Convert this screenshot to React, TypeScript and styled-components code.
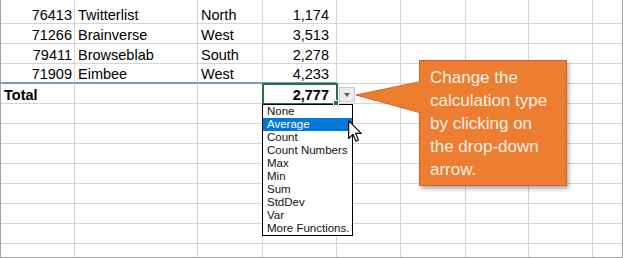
import styled, { createGlobalStyle } from "styled-components";

const GlobalStyle = createGlobalStyle`
    html, body {
        margin: 0;
        padding: 0;
        background: #fff;
        overflow: hidden;
    }
`;

const COLS = [74, 123, 65, 74, 64, 65, 63, 64, 29];
const ROW_HEIGHTS = [24, 20, 20, 20, 20, 20, 20, 20, 20, 20, 20, 20, 13];

const Sheet = styled.div`
    position: relative;
    width: 623px;
    height: 258px;
    box-sizing: border-box;
    border: 1px solid #a3a3a3;
    border-top: none;
    font-family: "Liberation Sans", Arial, sans-serif;
    color: #000;
`;

const Grid = styled.div`
    display: grid;
    grid-template-columns: ${COLS.map(c => `${c}px`).join(" ")};
    grid-template-rows: ${ROW_HEIGHTS.map(r => `${r}px`).join(" ")};
`;

const Cell = styled.div<{ $right?: boolean, $bold?: boolean, $lastCol?: boolean, $lastRow?: boolean, $blue?: boolean, $padR?: number, $selected?: boolean }>`
    position: relative;
    box-sizing: border-box;
    display: flex;
    align-items: flex-end;
    justify-content: ${props => props.$right ? "flex-end" : "flex-start"};
    padding: 0 ${props => props.$padR ?? 2}px 0 3px;
    font-size: 14.5px;
    line-height: 15px;
    font-weight: ${props => props.$bold ? 700 : 400};
    white-space: nowrap;
    overflow: ${props => props.$selected ? "visible" : "hidden"};
    border-right: ${props => props.$lastCol ? "none" : "1px solid #d4d4d4"};
    border-bottom: ${props => props.$lastRow ? "none" : props.$blue ? "2px solid #7f95c2" : "1px solid #d4d4d4"};
    outline: ${props => props.$selected ? "2px solid #217346" : "none"};
    outline-offset: -1px;
    z-index: ${props => props.$selected ? 2 : "auto"};

    ${props => props.$selected && `
        &::after {
            content: "";
            position: absolute;
            right: -3px;
            bottom: -3px;
            width: 4px;
            height: 4px;
            background: #217346;
            border: 1px solid #fff;
        }
    `}
`;

const ArrowButton = styled.div`
    position: absolute;
    left: 76px;
    top: 3px;
    width: 16px;
    height: 15px;
    box-sizing: border-box;
    background: #ececec;
    border: 1px solid #c9c9c9;
    display: flex;
    align-items: center;
    justify-content: center;

    &::after {
        content: "";
        border-left: 3.5px solid transparent;
        border-right: 3.5px solid transparent;
        border-top: 4px solid #5a5a5a;
    }
`;

const Popup = styled.div`
    position: absolute;
    left: -1px;
    top: 20px;
    font-weight: 400;
`;

const DropList = styled.ul`
    width: 91px;
    margin: 0;
    padding: 0;
    list-style: none;
    box-sizing: border-box;
    background: #fff;
    border: 1px solid #000;
    overflow: hidden;
`;

const DropItem = styled.li<{ $active?: boolean }>`
    height: 13px;
    line-height: 13px;
    padding-left: 4px;
    font-size: 11.5px;
    white-space: nowrap;
    background: ${props => props.$active ? "#0078d7" : "transparent"};
    color: ${props => props.$active ? "#fff" : "#111"};
`;

const Cursor = styled.svg`
    position: absolute;
    left: 86px;
    top: 16px;
    overflow: visible;
`;

const Callout = styled.div`
    position: absolute;
    left: 354px;
    top: 60px;
    display: flex;
    align-items: flex-start;
`;

const Pointer = styled.svg`
    position: relative;
    z-index: 1;
    flex: none;
    margin-top: 20px;
    margin-right: -2px;
    overflow: visible;
`;

const CalloutBox = styled.div`
    width: 148px;
    height: 126px;
    box-sizing: border-box;
    padding: 5px 6px 0 10px;
    background: #ed7d31;
    border: 1px solid #c9651f;
    box-shadow: 2px 3px 4px rgba(0, 0, 0, 0.3);
    color: #fdf1e4;
    font-size: 17px;
    line-height: 23px;
`;

const CalloutLine = styled.span`
    display: block;
    white-space: nowrap;
`;

const rows: string[][] = [
    ["76413", "Twitterlist", "North", "1,174"],
    ["71266", "Brainverse", "West", "3,513"],
    ["79411", "Browseblab", "South", "2,278"],
    ["71909", "Eimbee", "West", "4,233"],
    ["Total", "", "", "2,777"],
];

const functions = ["None", "Average", "Count", "Count Numbers", "Max", "Min", "Sum", "StdDev", "Var", "More Functions."];

const TotalDropdown = () => (
    <>
        <ArrowButton />
        <Popup>
            <DropList>
                {functions.map(f => (
                    <DropItem key={f} $active={f === "Average"}>{f}</DropItem>
                ))}
            </DropList>
            <Cursor width="14" height="22" viewBox="0 0 12 19">
                <path d="M0.5 0.5 L0.5 16 L4.2 12.4 L6.8 18.3 L9 17.3 L6.5 11.6 L11.3 11.6 Z" fill="#fff" stroke="#000" strokeWidth="1" strokeLinejoin="round" />
            </Cursor>
        </Popup>
    </>
);

const App = () => {
    return (
        <>
            <GlobalStyle />
            <Sheet>
                <Grid>
                    {ROW_HEIGHTS.map((_, r) =>
                        COLS.map((_, c) => {
                            const value = rows[r]?.[c] ?? "";
                            const isTotal = r === 4;
                            const selected = isTotal && c === 3;
                            return (
                                <Cell
                                    key={`${r}-${c}`}
                                    $right={c === 0 && !isTotal || c === 3}
                                    $padR={c === 3 ? 7 : 2}
                                    $bold={isTotal}
                                    $lastCol={c === COLS.length - 1}
                                    $lastRow={r === ROW_HEIGHTS.length - 1}
                                    $blue={r === 3 && c < 4}
                                    $selected={selected}
                                >
                                    {value}
                                    {selected && <TotalDropdown />}
                                </Cell>
                            );
                        })
                    )}
                </Grid>

                <Callout>
                    <Pointer width="66" height="34" viewBox="0 0 66 34">
                        <polygon points="1,15 66,1.7 66,32.7" fill="#ed7d31" />
                        <polyline points="65,1.7 1,15 65,32.7" fill="none" stroke="#c9651f" strokeWidth="1" />
                    </Pointer>
                    <CalloutBox>
                        <CalloutLine>Change the</CalloutLine>
                        <CalloutLine>calculation type</CalloutLine>
                        <CalloutLine>by clicking on</CalloutLine>
                        <CalloutLine>the drop-down</CalloutLine>
                        <CalloutLine>arrow.</CalloutLine>
                    </CalloutBox>
                </Callout>
            </Sheet>
        </>
    );
};

export default App;
